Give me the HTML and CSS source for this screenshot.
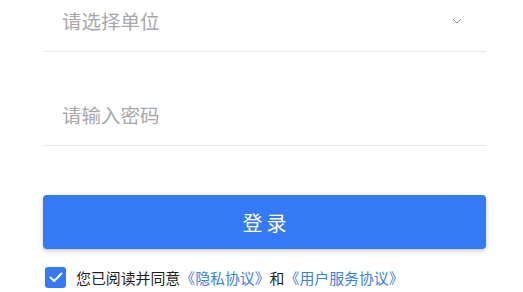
FILE: index.html
```html
<!DOCTYPE html>
<html lang="zh-CN">
<head>
<meta charset="utf-8">
<title>登录</title>
<link rel="stylesheet" href="styles.css">
</head>
<body>
<div class="form">
  <div class="field">
    <div class="row">
      <span class="placeholder">请选择单位</span>
      <svg class="chevron" width="10" height="6" viewBox="0 0 10 6"><path d="M1 1 L5 5 L9 1" fill="none" stroke="#8a8a8a" stroke-width="1"/></svg>
    </div>
  </div>
  <div class="field field-gap">
    <div class="row">
      <span class="placeholder">请输入密码</span>
    </div>
  </div>
  <button class="login">登录</button>
  <div class="agree">
    <span class="check"><svg width="14" height="11" viewBox="0 0 14 11"><path d="M1.5 5.5 L5.2 9 L12.5 1.5" fill="none" stroke="#fff" stroke-width="2" stroke-linecap="round" stroke-linejoin="round"/></svg></span>
    <span class="agree-text">您已阅读并同意<a class="link">《隐私协议》</a>和<a class="link">《用户服务协议》</a></span>
  </div>
</div>
</body>
</html>
```
FILE: styles.css
```css
html, body {
  margin: 0;
  padding: 0;
  background: #ffffff;
}
body {
  font-family: "Noto Sans CJK SC", "Noto Sans", sans-serif;
  overflow: hidden;
}
.form {
  padding: 2px 37px 0 43px;
  display: flex;
  flex-direction: column;
}
.field {
  padding-bottom: 9px;
  border-bottom: 1px solid #e8e8e8;
}
.field-gap {
  margin-top: 44px;
}
.row {
  height: 40px;
  display: flex;
  align-items: center;
  justify-content: space-between;
  padding: 0 24px 0 19px;
}
.placeholder {
  font-size: 19.5px;
  color: #a8a8a8;
  line-height: 1;
  margin-top: -3px;
}
.chevron {
  display: block;
  margin-top: -2px;
}
.login {
  margin-top: 49px;
  height: 54px;
  border: none;
  border-radius: 4px;
  background: #3479f5;
  color: #ffffff;
  font-family: inherit;
  font-size: 20px;
  letter-spacing: 4px;
  text-indent: 4px;
  box-shadow: 0 2px 4px rgba(0, 0, 0, 0.22);
  padding: 0;
}
.agree {
  margin-top: 18px;
  display: flex;
  align-items: center;
  gap: 10px;
  padding-left: 2px;
}
.check {
  width: 21px;
  height: 21px;
  border-radius: 3px;
  background: #3479f5;
  display: flex;
  align-items: center;
  justify-content: center;
}
.agree-text {
  font-size: 14.9px;
  color: #1f1f1f;
  line-height: 21px;
}
.link {
  color: #3a82e8;
}
```
